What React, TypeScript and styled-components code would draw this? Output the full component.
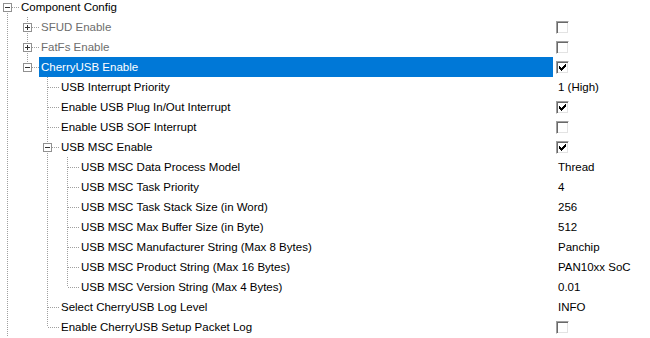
import styled, { createGlobalStyle } from "styled-components";

type Value = string | boolean | undefined;

type Node = {
  level: number;
  label: string;
  value?: Value;
  expander?: "open" | "closed";
  disabled?: boolean;
  selected?: boolean;
  guides: boolean[];
  last?: boolean;
};

const rows: Node[] = [
  { level: 0, label: "Component Config", expander: "open", guides: [] },
  { level: 1, label: "SFUD Enable", expander: "closed", disabled: true, value: false, guides: [true] },
  { level: 1, label: "FatFs Enable", expander: "closed", disabled: true, value: false, guides: [true] },
  { level: 1, label: "CherryUSB Enable", expander: "open", selected: true, value: true, guides: [true], last: true },
  { level: 2, label: "USB Interrupt Priority", value: "1 (High)", guides: [true, false] },
  { level: 2, label: "Enable USB Plug In/Out Interrupt", value: true, guides: [true, false] },
  { level: 2, label: "Enable USB SOF Interrupt", value: false, guides: [true, false] },
  { level: 2, label: "USB MSC Enable", expander: "open", value: true, guides: [true, false] },
  { level: 3, label: "USB MSC Data Process Model", value: "Thread", guides: [true, false, true] },
  { level: 3, label: "USB MSC Task Priority", value: "4", guides: [true, false, true] },
  { level: 3, label: "USB MSC Task Stack Size (in Word)", value: "256", guides: [true, false, true] },
  { level: 3, label: "USB MSC Max Buffer Size (in Byte)", value: "512", guides: [true, false, true] },
  { level: 3, label: "USB MSC Manufacturer String (Max 8 Bytes)", value: "Panchip", guides: [true, false, true] },
  { level: 3, label: "USB MSC Product String (Max 16 Bytes)", value: "PAN10xx SoC", guides: [true, false, true] },
  { level: 3, label: "USB MSC Version String (Max 4 Bytes)", value: "0.01", guides: [true, false, true], last: true },
  { level: 2, label: "Select CherryUSB Log Level", value: "INFO", guides: [true, false] },
  { level: 2, label: "Enable CherryUSB Setup Packet Log", value: false, guides: [true, false], last: true },
];

const LINE = "#a0a0a0";

export default function App() {
  return (
    <>
      <GlobalStyle />
      <Tree>
        {rows.map((row, i) => (
          <Row key={i}>
            <NameCell>
              {row.guides.map((on, k) => (
                <Guide key={k} on={on} />
              ))}
              <Connector node={row} />
              <Label $selected={row.selected} $disabled={row.disabled}>
                {row.label}
              </Label>
            </NameCell>
            <ValueCell>
              {typeof row.value === "boolean" ? (
                <CheckBox checked={row.value} />
              ) : (
                row.value && <ValueText>{row.value}</ValueText>
              )}
            </ValueCell>
          </Row>
        ))}
      </Tree>
    </>
  );
}

function Guide({ on }: { on: boolean }) {
  return (
    <LineSvg width="20" height="20" viewBox="0 0 20 20">
      {on && <line x1="7.5" y1="0" x2="7.5" y2="20" stroke={LINE} strokeDasharray="1 1" />}
    </LineSvg>
  );
}

function Connector({ node }: { node: Node }) {
  const isRoot = node.level === 0;
  return (
    <LineSvg width="20" height="20" viewBox="0 0 20 20">
      {!isRoot && <line x1="7.5" y1="0" x2="7.5" y2="10" stroke={LINE} strokeDasharray="1 1" />}
      {(!node.last || isRoot) && (
        <line x1="7.5" y1="10" x2="7.5" y2="20" stroke={LINE} strokeDasharray="1 1" />
      )}
      <line x1={node.expander ? 12 : 8} y1="10.5" x2="19" y2="10.5" stroke={LINE} strokeDasharray="1 1" />
      {node.expander && (
        <g shapeRendering="crispEdges">
          <rect x="3.5" y="6.5" width="8" height="8" fill="#fff" stroke="#919191" />
          <line x1="5" y1="10.5" x2="10" y2="10.5" stroke="#333" />
          {node.expander === "closed" && (
            <line x1="7.5" y1="8" x2="7.5" y2="13" stroke="#333" />
          )}
        </g>
      )}
    </LineSvg>
  );
}

function CheckBox({ checked }: { checked: boolean }) {
  return (
    <Box>
      {checked && (
        <svg width="7" height="7" viewBox="0 0 7 7" shapeRendering="crispEdges">
          <path
            d="M6 0h1v3h-1v1h-1v1h-1v1h-1v1h-1v-1h-1v-1h-1v-3h1v1h1v1h1v-1h1v-1h1z"
            fill="#000"
          />
        </svg>
      )}
    </Box>
  );
}

const GlobalStyle = createGlobalStyle`
  body {
    margin: 0;
    background: #fff;
    overflow: hidden;
  }
`;

const Tree = styled.div`
  margin-top: -3px;
  font-family: "Liberation Sans", Arial, sans-serif;
  font-size: 11.5px;
  color: #000;
`;

const Row = styled.div`
  display: flex;
  height: 20px;
  align-items: center;
`;

const NameCell = styled.div`
  display: flex;
  align-items: center;
  width: 554px;
  height: 20px;
  flex-shrink: 0;
`;

const LineSvg = styled.svg`
  display: block;
  flex-shrink: 0;
`;

const Label = styled.div<{ $selected?: boolean; $disabled?: boolean }>`
  flex: 1;
  height: 20px;
  line-height: 20px;
  margin-left: -1px;
  margin-right: 1px;
  padding-left: 2px;
  white-space: nowrap;
  overflow: hidden;
  background: ${(p) => (p.$selected ? "#0078d7" : "transparent")};
  color: ${(p) => (p.$selected ? "#fff" : p.$disabled ? "#6d6d6d" : "#000")};
`;

const ValueCell = styled.div`
  display: flex;
  align-items: center;
  padding-left: 2px;
  height: 20px;
`;

const ValueText = styled.span`
  padding-left: 2px;
  line-height: 20px;
  white-space: nowrap;
`;

const Box = styled.div`
  box-sizing: border-box;
  width: 13px;
  height: 13px;
  border: 1px solid;
  border-color: #a0a0a0 #fff #fff #a0a0a0;
  box-shadow: inset 1px 1px 0 #696969, inset -1px -1px 0 #e3e3e3;
  background: #fff;
  display: flex;
  align-items: flex-start;
  justify-content: flex-start;
  padding: 2px 0 0 2px;
`;
